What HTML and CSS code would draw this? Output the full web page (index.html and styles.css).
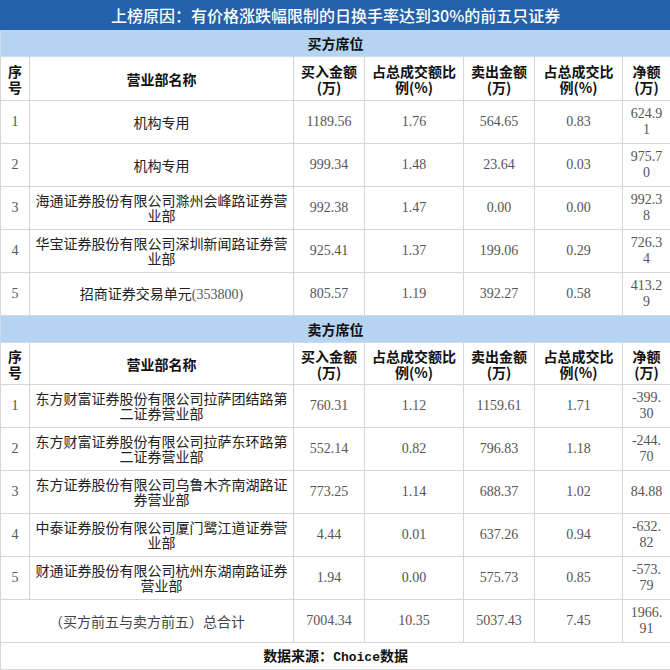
FILE: index.html
```html
<!DOCTYPE html>
<html lang="zh-CN">
<head>
<meta charset="utf-8">
<title>龙虎榜</title>
<link rel="stylesheet" href="styles.css">
</head>
<body>
<table class="board">
  <colgroup>
    <col class="c-seq"><col class="c-name"><col class="c-buy"><col class="c-bpct"><col class="c-sell"><col class="c-spct"><col class="c-net">
  </colgroup>
  <tbody>
    <tr class="title-row"><td colspan="7">上榜原因：有价格涨跌幅限制的日换手率达到30%的前五只证券</td></tr>
    <tr class="section-row"><td colspan="7">买方席位</td></tr>
    <tr class="head-row">
      <td>序<br>号</td><td>营业部名称</td><td>买入金额<br>(万)</td><td>占总成交额比<br>例(%)</td><td>卖出金额<br>(万)</td><td>占总成交比<br>例(%)</td><td>净额<br>(万)</td>
    </tr>
    <tr class="data-row"><td class="num">1</td><td class="name">机构专用</td><td class="num">1189.56</td><td class="num">1.76</td><td class="num">564.65</td><td class="num">0.83</td><td class="num">624.9<br>1</td></tr>
    <tr class="data-row"><td class="num">2</td><td class="name">机构专用</td><td class="num">999.34</td><td class="num">1.48</td><td class="num">23.64</td><td class="num">0.03</td><td class="num">975.7<br>0</td></tr>
    <tr class="data-row"><td class="num">3</td><td class="name">海通证券股份有限公司滁州会峰路证券营业部</td><td class="num">992.38</td><td class="num">1.47</td><td class="num">0.00</td><td class="num">0.00</td><td class="num">992.3<br>8</td></tr>
    <tr class="data-row"><td class="num">4</td><td class="name">华宝证券股份有限公司深圳新闻路证券营业部</td><td class="num">925.41</td><td class="num">1.37</td><td class="num">199.06</td><td class="num">0.29</td><td class="num">726.3<br>4</td></tr>
    <tr class="data-row"><td class="num">5</td><td class="name">招商证券交易单元<span class="digits">(353800)</span></td><td class="num">805.57</td><td class="num">1.19</td><td class="num">392.27</td><td class="num">0.58</td><td class="num">413.2<br>9</td></tr>
    <tr class="section-row"><td colspan="7">卖方席位</td></tr>
    <tr class="head-row head-sell">
      <td>序<br>号</td><td>营业部名称</td><td>买入金额<br>(万)</td><td>占总成交额比<br>例(%)</td><td>卖出金额<br>(万)</td><td>占总成交比<br>例(%)</td><td>净额<br>(万)</td>
    </tr>
    <tr class="data-row"><td class="num">1</td><td class="name">东方财富证券股份有限公司拉萨团结路第二证券营业部</td><td class="num">760.31</td><td class="num">1.12</td><td class="num">1159.61</td><td class="num">1.71</td><td class="num">-399.<br>30</td></tr>
    <tr class="data-row"><td class="num">2</td><td class="name">东方财富证券股份有限公司拉萨东环路第二证券营业部</td><td class="num">552.14</td><td class="num">0.82</td><td class="num">796.83</td><td class="num">1.18</td><td class="num">-244.<br>70</td></tr>
    <tr class="data-row"><td class="num">3</td><td class="name">东方证券股份有限公司乌鲁木齐南湖路证券营业部</td><td class="num">773.25</td><td class="num">1.14</td><td class="num">688.37</td><td class="num">1.02</td><td class="num">84.88</td></tr>
    <tr class="data-row"><td class="num">4</td><td class="name">中泰证券股份有限公司厦门鹭江道证券营业部</td><td class="num">4.44</td><td class="num">0.01</td><td class="num">637.26</td><td class="num">0.94</td><td class="num">-632.<br>82</td></tr>
    <tr class="data-row"><td class="num">5</td><td class="name">财通证券股份有限公司杭州东湖南路证券营业部</td><td class="num">1.94</td><td class="num">0.00</td><td class="num">575.73</td><td class="num">0.85</td><td class="num">-573.<br>79</td></tr>
    <tr class="data-row total-row"><td class="name" colspan="2">（买方前五与卖方前五）总合计</td><td class="num">7004.34</td><td class="num">10.35</td><td class="num">5037.43</td><td class="num">7.45</td><td class="num">1966.<br>91</td></tr>
    <tr class="source-row"><td colspan="7">数据来源：<span class="latin">Choice</span>数据</td></tr>
  </tbody>
</table>
</body>
</html>
```
FILE: styles.css
```css
html, body {
  margin: 0;
  padding: 0;
  background: #ffffff;
}

.board {
  width: 670px;
  table-layout: fixed;
  border-collapse: collapse;
  font-family: "Noto Sans CJK SC", "Noto Sans", sans-serif;
  font-size: 14px;
  line-height: 15px;
  color: #222;
}

.c-seq { width: 29px; }
.c-name { width: 264px; }
.c-buy { width: 71px; }
.c-bpct { width: 99px; }
.c-sell { width: 71px; }
.c-spct { width: 88px; }
.c-net { width: 48px; }

.board td {
  border: 1px solid #d6d6d6;
  padding: 0 2px;
  text-align: center;
  vertical-align: middle;
  overflow: hidden;
  white-space: normal;
}

.title-row td {
  height: 28px;
  background: #2361aa;
  color: #ffffff;
  font-size: 16px;
  font-weight: 500;
  border-color: #2361aa;
  padding: 0;
}

.section-row td {
  height: 26px;
  background: #b6d3f1;
  font-weight: bold;
  color: #111;
  border-color: #c9dcf0;
}

.head-row td {
  height: 43px;
  font-weight: bold;
  color: #111;
  line-height: 16px;
  white-space: nowrap;
}

.head-sell td {
  height: 41px;
}

.data-row td {
  height: 42px;
}

.name {
  color: #222;
  padding: 0 3px;
}

.num {
  font-family: "Liberation Serif", "Noto Sans CJK SC", serif;
  font-size: 14px;
  line-height: 16px;
  color: #555;
}

.digits {
  font-family: "Liberation Serif", serif;
  color: #555;
}

.total-row .name {
  color: #444;
}

.source-row td {
  height: 26px;
  font-weight: bold;
  color: #111;
}

.latin {
  font-family: "Liberation Mono", monospace;
  font-size: 13px;
  font-weight: bold;
}
```
